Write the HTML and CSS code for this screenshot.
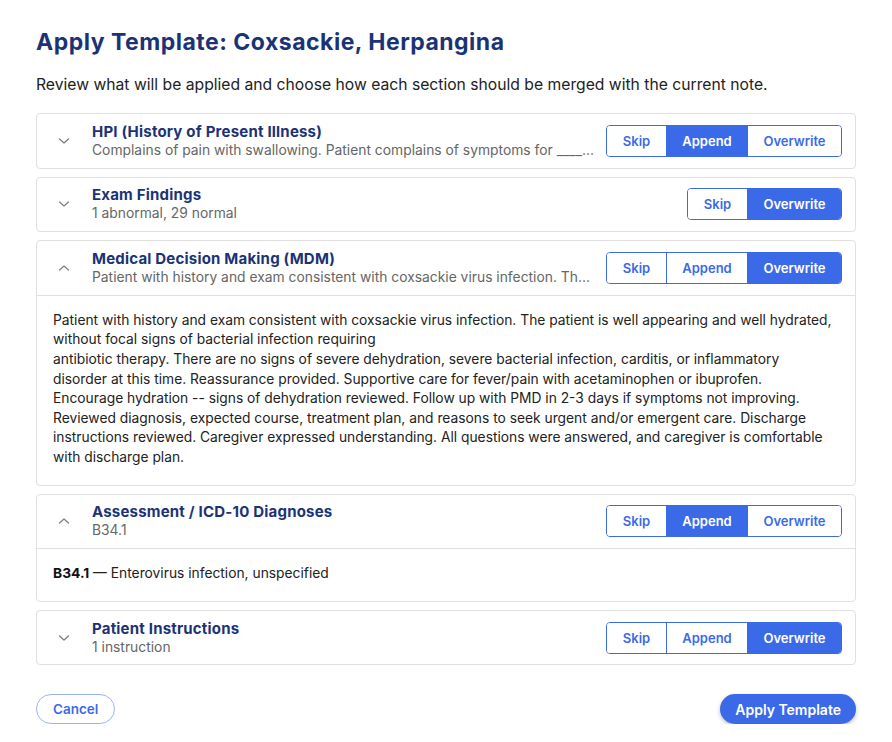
FILE: index.html
```html
<!DOCTYPE html>
<html lang="en">
<head>
<meta charset="utf-8">
<title>Apply Template</title>
<link rel="stylesheet" href="styles.css">
</head>
<body>
<div class="dialog">
  <h1 class="title">Apply Template: Coxsackie, Herpangina</h1>
  <p class="intro">Review what will be applied and choose how each section should be merged with the current note.</p>

  <div class="sections">
    <section class="card">
      <div class="card-head">
        <svg class="chev" viewBox="0 0 12 8" width="12" height="8"><path d="M1.5 2 L6 6 L10.5 2"/></svg>
        <div class="head-text">
          <div class="sec-title">HPI (History of Present Illness)</div>
          <div class="sec-sub">Complains of pain with swallowing. Patient complains of symptoms for ____ days. Associated symptoms include fever.</div>
        </div>
        <div class="seg">
          <button class="seg-btn skip">Skip</button>
          <button class="seg-btn append active">Append</button>
          <button class="seg-btn over">Overwrite</button>
        </div>
      </div>
    </section>

    <section class="card">
      <div class="card-head">
        <svg class="chev" viewBox="0 0 12 8" width="12" height="8"><path d="M1.5 2 L6 6 L10.5 2"/></svg>
        <div class="head-text">
          <div class="sec-title">Exam Findings</div>
          <div class="sec-sub">1 abnormal, 29 normal</div>
        </div>
        <div class="seg">
          <button class="seg-btn skip">Skip</button>
          <button class="seg-btn over active">Overwrite</button>
        </div>
      </div>
    </section>

    <section class="card">
      <div class="card-head">
        <svg class="chev" viewBox="0 0 12 8" width="12" height="8"><path d="M1.5 6 L6 2 L10.5 6"/></svg>
        <div class="head-text">
          <div class="sec-title">Medical Decision Making (MDM)</div>
          <div class="sec-sub">Patient with history and exam consistent with coxsackie virus infection. The patient is well appearing and well hydrated.</div>
        </div>
        <div class="seg">
          <button class="seg-btn skip">Skip</button>
          <button class="seg-btn append">Append</button>
          <button class="seg-btn over active">Overwrite</button>
        </div>
      </div>
      <p class="card-body">Patient with history and exam consistent with coxsackie virus infection. The patient is well appearing and well hydrated,<br>without focal signs of bacterial infection requiring<br>antibiotic therapy. There are no signs of severe dehydration, severe bacterial infection, carditis, or inflammatory<br>disorder at this time. Reassurance provided. Supportive care for fever/pain with acetaminophen or ibuprofen.<br>Encourage hydration -- signs of dehydration reviewed. Follow up with PMD in 2-3 days if symptoms not improving.<br>Reviewed diagnosis, expected course, treatment plan, and reasons to seek urgent and/or emergent care. Discharge<br>instructions reviewed. Caregiver expressed understanding. All questions were answered, and caregiver is comfortable<br>with discharge plan.</p>
    </section>

    <section class="card">
      <div class="card-head">
        <svg class="chev" viewBox="0 0 12 8" width="12" height="8"><path d="M1.5 6 L6 2 L10.5 6"/></svg>
        <div class="head-text">
          <div class="sec-title">Assessment / ICD-10 Diagnoses</div>
          <div class="sec-sub">B34.1</div>
        </div>
        <div class="seg">
          <button class="seg-btn skip">Skip</button>
          <button class="seg-btn append active">Append</button>
          <button class="seg-btn over">Overwrite</button>
        </div>
      </div>
      <p class="card-body"><strong>B34.1</strong> — Enterovirus infection, unspecified</p>
    </section>

    <section class="card">
      <div class="card-head">
        <svg class="chev" viewBox="0 0 12 8" width="12" height="8"><path d="M1.5 2 L6 6 L10.5 2"/></svg>
        <div class="head-text">
          <div class="sec-title">Patient Instructions</div>
          <div class="sec-sub">1 instruction</div>
        </div>
        <div class="seg">
          <button class="seg-btn skip">Skip</button>
          <button class="seg-btn append">Append</button>
          <button class="seg-btn over active">Overwrite</button>
        </div>
      </div>
    </section>
  </div>

  <div class="footer">
    <button class="btn-cancel">Cancel</button>
    <button class="btn-apply">Apply Template</button>
  </div>
</div>
</body>
</html>
```

FILE: styles.css
```css
* { box-sizing: border-box; }
html, body { margin: 0; padding: 0; background: #fff; }
body {
  font-family: "Inter", "Noto Sans", "Liberation Sans", sans-serif;
  color: #222;
}
.dialog {
  padding: 28px 36px 0 36px;
}
.title {
  margin: 0;
  font-size: 23px;
  line-height: 28px;
  font-weight: 700;
  letter-spacing: 0.5px;
  color: #1b3376;
}
.intro {
  margin: 18px 0 17px;
  font-size: 15.7px;
  line-height: 22px;
  color: #222;
}
.sections {
  display: flex;
  flex-direction: column;
  gap: 8px;
}
.card {
  border: 1px solid #e0e0e0;
  border-radius: 4px;
  background: #fff;
}
.card-head {
  display: flex;
  align-items: center;
  padding: 9px 13px 9px 21px;
  height: 53.6px;
}
.chev {
  flex: none;
  width: 12px;
  height: 8px;
  margin-right: 22px;
}
.chev path {
  fill: none;
  stroke: #808080;
  stroke-width: 1.3;
  stroke-linecap: round;
  stroke-linejoin: round;
}
.head-text {
  flex: 1;
  min-width: 0;
  margin-right: 9px;
}
.sec-title {
  font-size: 15px;
  line-height: 18px;
  font-weight: 700;
  letter-spacing: 0.2px;
  color: #1b3376;
}
.sec-sub {
  font-size: 13.85px;
  line-height: 18px;
  color: #666;
  white-space: nowrap;
  overflow: hidden;
  text-overflow: ellipsis;
}
.seg {
  flex: none;
  display: flex;
  border: 1px solid #3b6ae8;
  border-radius: 4px;
  overflow: hidden;
  height: 32px;
}
.seg-btn {
  font-family: inherit;
  font-size: 13px;
  line-height: 30px;
  font-weight: 600;
  color: #3b6ae8;
  background: #fff;
  border: 0;
  padding: 0;
  height: 30px;
  cursor: pointer;
}
.seg-btn + .seg-btn { border-left: 1px solid #3b6ae8; }
.seg-btn.active { background: #3b6ae8; color: #fff; }
.skip { width: 59px; }
.append { width: 81px; }
.over { width: 94px; }
.card-body {
  margin: 0;
  border-top: 1px solid #e0e0e0;
  padding: 15px 16px 17px;
  font-size: 13.8px;
  line-height: 19.6px;
  color: #222;
}
.card-body strong { font-weight: 700; color: #111; }
.footer {
  display: flex;
  justify-content: space-between;
  align-items: center;
  margin-top: 29px;
}
.btn-cancel {
  font-family: inherit;
  height: 30px;
  padding: 0 16px;
  border: 1px solid #9ab3f4;
  border-radius: 15px;
  background: #fff;
  color: #3b6ae8;
  font-size: 13.5px;
  font-weight: 600;
}
.btn-apply {
  font-family: inherit;
  height: 30px;
  padding: 0 15px;
  border: 0;
  border-radius: 15px;
  background: #3b6ae8;
  color: #fff;
  font-size: 14px;
  font-weight: 600;
  box-shadow: 0 2px 4px rgba(0,0,0,0.25);
}
```
